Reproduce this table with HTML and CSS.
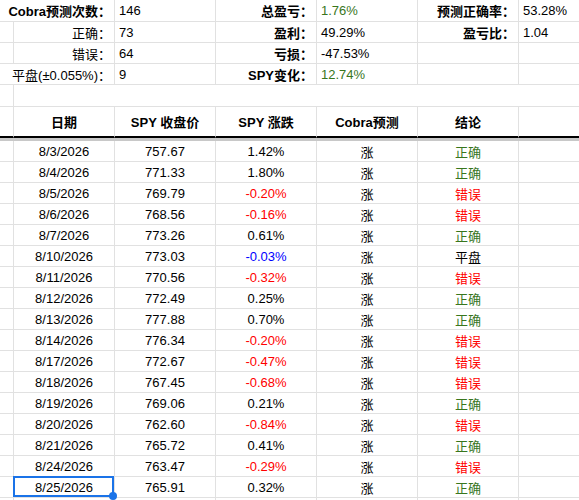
FILE: index.html
```html
<!doctype html>
<html>
<head>
<meta charset="utf-8">
<title>Cobra预测</title>
<link rel="stylesheet" href="styles.css">
</head>
<body>
<div class="sheet">
	<!-- summary -->
	<div class="cell lbl span2 b">Cobra预测次数：</div>
	<div class="cell val">146</div>
	<div class="cell lbl b">总盈亏：</div>
	<div class="cell val pos">1.76%</div>
	<div class="cell lbl b">预测正确率：</div>
	<div class="cell val last">53.28%</div>

	<div class="cell"></div>
	<div class="cell lbl">正确：</div>
	<div class="cell val">73</div>
	<div class="cell lbl b">盈利：</div>
	<div class="cell val">49.29%</div>
	<div class="cell lbl b">盈亏比：</div>
	<div class="cell val last">1.04</div>

	<div class="cell"></div>
	<div class="cell lbl">错误：</div>
	<div class="cell val">64</div>
	<div class="cell lbl b">亏损：</div>
	<div class="cell val">-47.53%</div>
	<div class="cell"></div>
	<div class="cell last"></div>

	<div class="cell lbl span2">平盘(±0.055%)：</div>
	<div class="cell val">9</div>
	<div class="cell lbl b">SPY变化：</div>
	<div class="cell val pos">12.74%</div>
	<div class="cell"></div>
	<div class="cell last"></div>

	<div class="cell"></div>
	<div class="cell span6 last"></div>

	<!-- header -->
	<div class="cell head"></div>
	<div class="cell head c b">日期</div>
	<div class="cell head c b">SPY 收盘价</div>
	<div class="cell head c b">SPY 涨跌</div>
	<div class="cell head c b">Cobra预测</div>
	<div class="cell head c b">结论</div>
	<div class="cell head last"></div>
	<div class="freeze"></div>

	<!-- rows -->
	<div class="cell"></div><div class="cell c">8/3/2026</div><div class="cell c">757.67</div><div class="cell c">1.42%</div><div class="cell c">涨</div><div class="cell c pos">正确</div><div class="cell last"></div>
	<div class="cell"></div><div class="cell c">8/4/2026</div><div class="cell c">771.33</div><div class="cell c">1.80%</div><div class="cell c">涨</div><div class="cell c pos">正确</div><div class="cell last"></div>
	<div class="cell"></div><div class="cell c">8/5/2026</div><div class="cell c">769.79</div><div class="cell c neg">-0.20%</div><div class="cell c">涨</div><div class="cell c neg">错误</div><div class="cell last"></div>
	<div class="cell"></div><div class="cell c">8/6/2026</div><div class="cell c">768.56</div><div class="cell c neg">-0.16%</div><div class="cell c">涨</div><div class="cell c neg">错误</div><div class="cell last"></div>
	<div class="cell"></div><div class="cell c">8/7/2026</div><div class="cell c">773.26</div><div class="cell c">0.61%</div><div class="cell c">涨</div><div class="cell c pos">正确</div><div class="cell last"></div>
	<div class="cell"></div><div class="cell c">8/10/2026</div><div class="cell c">773.03</div><div class="cell c flat">-0.03%</div><div class="cell c">涨</div><div class="cell c">平盘</div><div class="cell last"></div>
	<div class="cell"></div><div class="cell c">8/11/2026</div><div class="cell c">770.56</div><div class="cell c neg">-0.32%</div><div class="cell c">涨</div><div class="cell c neg">错误</div><div class="cell last"></div>
	<div class="cell"></div><div class="cell c">8/12/2026</div><div class="cell c">772.49</div><div class="cell c">0.25%</div><div class="cell c">涨</div><div class="cell c pos">正确</div><div class="cell last"></div>
	<div class="cell"></div><div class="cell c">8/13/2026</div><div class="cell c">777.88</div><div class="cell c">0.70%</div><div class="cell c">涨</div><div class="cell c pos">正确</div><div class="cell last"></div>
	<div class="cell"></div><div class="cell c">8/14/2026</div><div class="cell c">776.34</div><div class="cell c neg">-0.20%</div><div class="cell c">涨</div><div class="cell c neg">错误</div><div class="cell last"></div>
	<div class="cell"></div><div class="cell c">8/17/2026</div><div class="cell c">772.67</div><div class="cell c neg">-0.47%</div><div class="cell c">涨</div><div class="cell c neg">错误</div><div class="cell last"></div>
	<div class="cell"></div><div class="cell c">8/18/2026</div><div class="cell c">767.45</div><div class="cell c neg">-0.68%</div><div class="cell c">涨</div><div class="cell c neg">错误</div><div class="cell last"></div>
	<div class="cell"></div><div class="cell c">8/19/2026</div><div class="cell c">769.06</div><div class="cell c">0.21%</div><div class="cell c">涨</div><div class="cell c pos">正确</div><div class="cell last"></div>
	<div class="cell"></div><div class="cell c">8/20/2026</div><div class="cell c">762.60</div><div class="cell c neg">-0.84%</div><div class="cell c">涨</div><div class="cell c neg">错误</div><div class="cell last"></div>
	<div class="cell"></div><div class="cell c">8/21/2026</div><div class="cell c">765.72</div><div class="cell c">0.41%</div><div class="cell c">涨</div><div class="cell c pos">正确</div><div class="cell last"></div>
	<div class="cell"></div><div class="cell c">8/24/2026</div><div class="cell c">763.47</div><div class="cell c neg">-0.29%</div><div class="cell c">涨</div><div class="cell c neg">错误</div><div class="cell last"></div>
	<div class="cell"></div><div class="cell c sel">8/25/2026</div><div class="cell c">765.91</div><div class="cell c">0.32%</div><div class="cell c">涨</div><div class="cell c pos">正确</div><div class="cell last"></div>
	<div class="cell"></div><div class="cell"></div><div class="cell"></div><div class="cell"></div><div class="cell"></div><div class="cell"></div><div class="cell last"></div>
</div>
</body>
</html>
```

FILE: styles.css
```css
body { margin: 0; background: #fff; overflow: hidden; font: 13px "Liberation Sans", "Noto Sans CJK SC", sans-serif; color: #000; }
.sheet { display: grid; width: 580px; grid-template-columns: 14px 101px 101px 101px 101px 101px 61px; grid-template-rows: 22px 21px 21px 21px 22px 31px 3px; grid-auto-rows: 21px; }
.cell { box-sizing: border-box; border-right: 1px solid #e1e1e1; border-bottom: 1px solid #e1e1e1; display: flex; align-items: center; white-space: nowrap; padding: 0 3px; min-width: 0; }
.cell.last { border-right: 0; }
.span2 { grid-column: span 2; }
.span6 { grid-column: span 6; }
.lbl { justify-content: flex-end; }
.val { justify-content: flex-start; padding-left: 4px; }
.c { justify-content: center; }
.b { font-weight: bold; }
.head { border-bottom: 2px solid #000; }
.freeze { grid-column: 1 / -1; background: #c8c8c8; }
.pos { color: #38761d; }
.neg { color: #ff0000; }
.flat { color: #0000ff; }
.sel { position: relative; z-index: 1; }
.sel::after { content: ""; position: absolute; left: -1px; top: -1px; right: 0; bottom: 0; border: 2px solid #1a73e8; }
.sel::before { content: ""; position: absolute; right: -3px; bottom: -3px; width: 8px; height: 8px; border-radius: 50%; background: #1a73e8; z-index: 2; }
```
